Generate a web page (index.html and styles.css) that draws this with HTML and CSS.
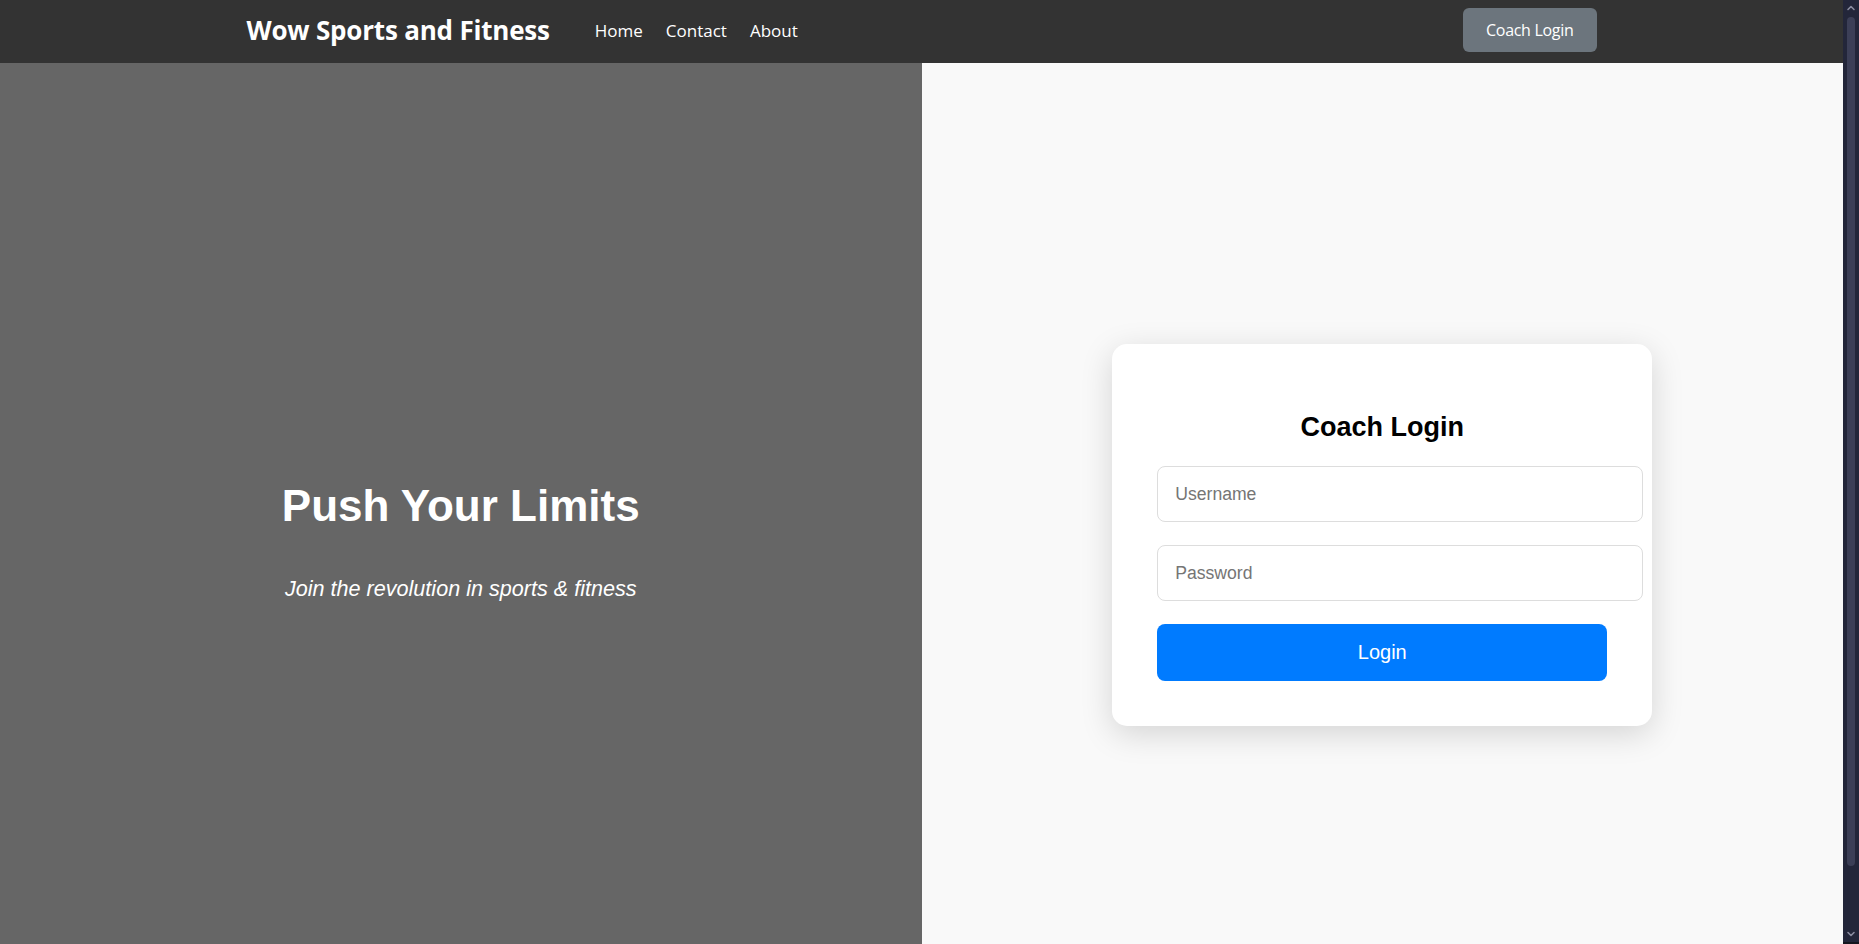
FILE: index.html
```html
<!DOCTYPE html>
<html lang="en">
<head>
<meta charset="utf-8">
<title>Wow Sports and Fitness - Coach Login</title>
<link rel="stylesheet" href="styles.css">
</head>
<body>
<div class="page">
  <header class="navbar">
    <div class="nav-inner">
      <a class="brand" href="#">Wow Sports and Fitness</a>
      <nav class="nav-links">
        <a href="#">Home</a>
        <a href="#">Contact</a>
        <a href="#">About</a>
      </nav>
      <a class="nav-btn" href="#">Coach Login</a>
    </div>
  </header>
  <main class="split">
    <section class="hero">
      <div class="hero-content">
        <h1 class="hero-title">Push Your Limits</h1>
        <p class="hero-sub">Join the revolution in sports &amp; fitness</p>
      </div>
    </section>
    <section class="login-side">
      <form class="login-card" onsubmit="return false">
        <h2 class="login-title">Coach Login</h2>
        <input class="login-input" type="text" placeholder="Username">
        <input class="login-input" type="password" placeholder="Password">
        <button class="login-btn" type="submit">Login</button>
      </form>
    </section>
  </main>
</div>
<div class="scrollbar" aria-hidden="true">
  <svg class="sb-arrow" viewBox="0 0 16 16" width="16" height="16"><path d="M5 9.5 L8 6.5 L11 9.5" fill="none" stroke="#8a8ca0" stroke-width="1.6" stroke-linecap="round" stroke-linejoin="round"/></svg>
  <div class="sb-track"><div class="sb-thumb"></div></div>
  <svg class="sb-arrow" viewBox="0 0 16 16" width="16" height="16"><path d="M5 6.5 L8 9.5 L11 6.5" fill="none" stroke="#8a8ca0" stroke-width="1.6" stroke-linecap="round" stroke-linejoin="round"/></svg>
</div>
</body>
</html>
```

FILE: styles.css
```css
* {
  box-sizing: border-box;
}

html,
body {
  height: 100%;
}

body {
  margin: 0;
  display: flex;
  overflow: hidden;
  font-family: "Liberation Sans", Arial, sans-serif;
  background: #f9f9f9;
}

.page {
  flex: 1;
  min-width: 0;
  overflow: hidden;
}

/* imitation of the dark window scrollbar */
.scrollbar {
  width: 16px;
  flex: 0 0 16px;
  height: 100%;
  background: #23263a;
  display: flex;
  flex-direction: column;
  border-bottom: 2px solid #15161f;
}

.sb-arrow {
  display: block;
  flex: 0 0 16px;
}

.sb-track {
  flex: 1;
  display: flex;
  justify-content: center;
  padding: 1px 0 60px;
}

.sb-thumb {
  width: 8px;
  height: 100%;
  background: #3c3f57;
  border-radius: 4px;
}

.navbar {
  background: #333333;
  height: 63px;
}

.nav-inner {
  width: 1350px;
  height: 100%;
  margin: 0 auto;
  padding-bottom: 3px;
  display: flex;
  align-items: center;
}

.brand {
  font-family: "Open Sans", "Noto Sans", sans-serif;
  font-weight: 700;
  font-size: 26px;
  letter-spacing: -0.2px;
  color: #ffffff;
  text-decoration: none;
  margin-right: 45px;
}

.nav-links {
  display: flex;
  gap: 23px;
}

.nav-links a {
  font-family: "Open Sans", "Noto Sans", sans-serif;
  font-size: 17px;
  color: #ffffff;
  text-decoration: none;
}

.nav-btn {
  margin-left: auto;
  height: 44px;
  padding: 0 23px;
  display: inline-flex;
  align-items: center;
  background: #6c757d;
  border-radius: 6px;
  color: #ffffff;
  text-decoration: none;
  font-family: "Open Sans", "Noto Sans", sans-serif;
  font-size: 16px;
  letter-spacing: -0.3px;
}

.split {
  display: flex;
  height: 944px;
}

.hero {
  flex: 1;
  background: #666666;
  display: flex;
  align-items: center;
  justify-content: center;
}

.hero-content {
  text-align: center;
  color: #ffffff;
  padding-top: 15px;
}

.hero-title {
  margin: 0 0 41px;
  font-size: 44px;
  line-height: 52px;
  font-weight: 700;
}

.hero-sub {
  margin: 0;
  font-size: 21.6px;
  line-height: 32px;
  font-style: italic;
}

.login-side {
  flex: 1;
  background: #f9f9f9;
  display: flex;
  align-items: center;
  justify-content: center;
}

.login-card {
  width: 540px;
  padding: 45px;
  background: #ffffff;
  border-radius: 15px;
  box-shadow: 0 8px 32px rgba(0, 0, 0, 0.15);
}

.login-title {
  margin: 23px 0 23px;
  text-align: center;
  font-size: 27px;
  line-height: 31px;
  font-weight: 700;
  color: #000000;
}

.login-input {
  display: block;
  box-sizing: content-box;
  width: 100%;
  padding: 17px;
  margin: 0 0 23px;
  border: 1px solid #dddddd;
  border-radius: 8px;
  font-family: "Liberation Sans", Arial, sans-serif;
  font-size: 17.6px;
  line-height: 20px;
  height: 20px;
  color: #333333;
  background: #ffffff;
  outline: none;
}

.login-input::placeholder {
  color: #757575;
}

.login-btn {
  display: block;
  width: 100%;
  height: 57px;
  border: none;
  border-radius: 8px;
  background: #007bff;
  color: #ffffff;
  font-family: "Liberation Sans", Arial, sans-serif;
  font-size: 20px;
  cursor: pointer;
}
```
